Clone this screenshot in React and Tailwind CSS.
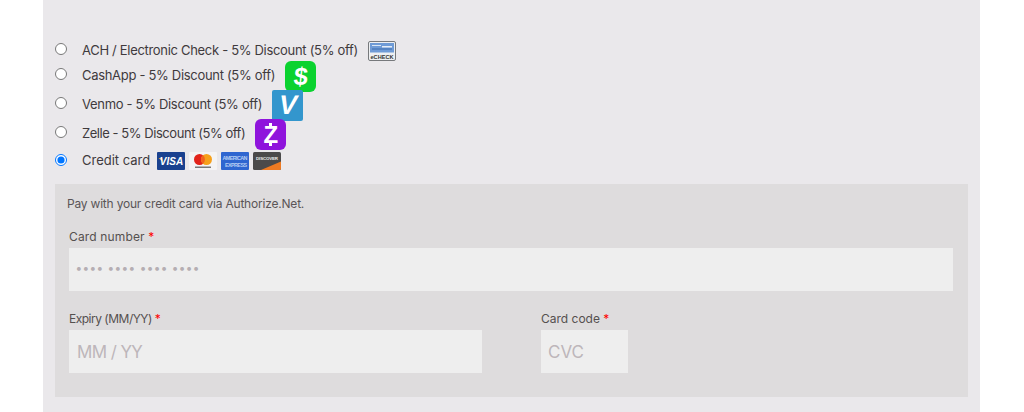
import React from 'react';

const font = { fontFamily: '"Inter", "Liberation Sans", sans-serif' };

function ECheckIcon() {
  return (
    <svg width="28" height="20" viewBox="0 0 28 20" className="shrink-0">
      <rect x="0.5" y="0.5" width="27" height="19" rx="1.5" fill="#eef0f2" stroke="#77797c" />
      <rect x="2" y="2" width="24" height="9.5" fill="#6f9bd6" />
      <rect x="4" y="4" width="9" height="1" fill="#d9e6f5" />
      <rect x="14" y="5" width="10" height="1.5" fill="#e6eef8" />
      <rect x="4" y="7.5" width="20" height="1" fill="#3f6fae" />
      <text x="14" y="17.5" textAnchor="middle" fontSize="5.6" fontWeight="700" fill="#333" fontFamily="Liberation Sans, sans-serif">eCHECK</text>
    </svg>
  );
}

function CashAppIcon() {
  return (
    <div className="w-[31px] h-[31px] shrink-0 rounded-[6px] bg-[#0bd22f] flex items-center justify-center text-white text-[25px] font-bold leading-none" style={{ fontFamily: '"Liberation Sans", sans-serif' }}>
      <span className="inline-block -skew-x-6">$</span>
    </div>
  );
}

function VenmoIcon() {
  return (
    <div className="w-[31px] h-[31px] shrink-0 rounded-[2px] bg-[#3396cd] flex items-center justify-center text-white text-[27px] font-bold leading-none" style={{ fontFamily: '"Liberation Sans", sans-serif' }}>
      <span className="inline-block -skew-x-12">V</span>
    </div>
  );
}

function ZelleIcon() {
  return (
    <div className="relative w-[31px] h-[31px] shrink-0 rounded-[6px] bg-[#8f14dc] flex items-center justify-center text-white text-[24px] font-bold leading-none" style={{ fontFamily: '"Liberation Sans", sans-serif' }}>
      Z
      <span className="absolute left-[14px] top-[4px] w-[3px] h-[4px] bg-white" />
      <span className="absolute left-[14px] bottom-[4px] w-[3px] h-[4px] bg-white" />
    </div>
  );
}

function VisaIcon() {
  return (
    <svg width="28" height="18" viewBox="0 0 28 18" className="shrink-0">
      <rect width="28" height="18" rx="1" fill="#1a418f" />
      <path d="M1.5 6 L5 6 L6 10 Z" fill="#e0a63c" />
      <text x="14.5" y="13" textAnchor="middle" fontSize="10" fontWeight="700" fontStyle="italic" fill="#fff" fontFamily="Liberation Sans, sans-serif">VISA</text>
    </svg>
  );
}

function MastercardIcon() {
  return (
    <svg width="28" height="18" viewBox="0 0 28 18" className="shrink-0">
      <rect width="28" height="18" rx="1" fill="#f4f3f4" />
      <circle cx="10.5" cy="7.5" r="5.5" fill="#e2231a" />
      <circle cx="17.5" cy="7.5" r="5.5" fill="#f6a01a" />
      <path d="M14 3.3 a5.5 5.5 0 0 1 0 8.4 a5.5 5.5 0 0 1 0 -8.4 Z" fill="#f2621e" />
      <rect x="6" y="14.5" width="16" height="1.5" fill="#777" />
    </svg>
  );
}

function AmexIcon() {
  return (
    <svg width="28" height="18" viewBox="0 0 28 18" className="shrink-0">
      <rect width="28" height="18" rx="1" fill="#2f66d0" />
      <text x="14" y="8" textAnchor="middle" fontSize="5.4" fontWeight="700" fill="#b6cdf2" fontFamily="Liberation Sans, sans-serif" textLength="25">AMERICAN</text>
      <text x="15" y="14.5" textAnchor="middle" fontSize="5.4" fontWeight="700" fill="#b6cdf2" fontFamily="Liberation Sans, sans-serif" textLength="22">EXPRESS</text>
    </svg>
  );
}

function DiscoverIcon() {
  return (
    <svg width="28" height="18" viewBox="0 0 28 18" className="shrink-0">
      <rect width="28" height="18" rx="1.5" fill="#4b4a4a" />
      <path d="M8 18 L28 9.5 L28 16.5 a1.5 1.5 0 0 1 -1.5 1.5 Z" fill="#ee7a22" />
      <text x="14" y="7.5" textAnchor="middle" fontSize="4.4" fontWeight="700" fill="#eee" fontFamily="Liberation Sans, sans-serif" textLength="22">DISCOVER</text>
    </svg>
  );
}

function PayRow({ label, checked, height, gap, children, tracking = 'tracking-[-0.31px]' }) {
  return (
    <label className={`flex items-center ${height}`}>
      <input type="radio" name="payment" defaultChecked={checked} className="w-[12px] h-[12px] m-0 -mt-[3px] shrink-0" />
      <span className={`ml-[15px] text-[13px] text-[#3f3a3d] whitespace-nowrap ${tracking}`}>{label}</span>
      <span className={`flex items-center ${gap}`}>{children}</span>
    </label>
  );
}

function Field({ label, className, placeholder, inputClass, labelClass = '' }) {
  return (
    <div className={className}>
      <p className={`text-[12px] leading-[18px] text-[#55504f] ${labelClass}`}>
        {label} <span className="text-[#f00]">*</span>
      </p>
      <input placeholder={placeholder} className={`block w-full h-[43px] mt-[2px] bg-[#eeeeee] outline-none ${inputClass}`} style={font} />
    </div>
  );
}

export default function App() {
  return (
    <div className="h-[412px] bg-white overflow-hidden" style={font}>
      <div className="ml-[43px] w-[937px] h-full bg-[#eae8eb] px-[12px] pt-[40px]">
        <PayRow label="ACH / Electronic Check - 5% Discount (5% off)" height="h-[21px]" gap="ml-[10px]">
          <ECheckIcon />
        </PayRow>
        <PayRow label="CashApp - 5% Discount (5% off)" height="h-[29px]" gap="ml-[10px] mt-[2px]">
          <CashAppIcon />
        </PayRow>
        <PayRow label="Venmo - 5% Discount (5% off)" height="h-[29px]" gap="ml-[10px] mt-[2px]">
          <VenmoIcon />
        </PayRow>
        <PayRow label="Zelle - 5% Discount (5% off)" height="h-[29px]" gap="ml-[10px] mt-[2px]" tracking="tracking-[-0.45px]">
          <ZelleIcon />
        </PayRow>
        <PayRow label="Credit card" checked height="h-[26px]" gap="ml-[7px] gap-[4px]" tracking="tracking-normal">
          <VisaIcon />
          <MastercardIcon />
          <AmexIcon />
          <DiscoverIcon />
        </PayRow>

        <div className="mt-[10px] h-[213px] w-[913px] bg-[#dedcdd] pl-[14px] pr-[15px] pt-[12px]">
          <p className="-ml-[2px] text-[12px] leading-[16px] tracking-[-0.2px] text-[#5a5557]">Pay with your credit card via Authorize.Net.</p>
          <Field label="Card number" className="mt-[16px]" labelClass="tracking-[0.15px]" placeholder="•••• •••• •••• ••••" inputClass="pl-[7px] pb-[5px] text-[12px] font-bold tracking-[1.3px] placeholder:text-[#b5aeb3]" />
          <div className="flex mt-[19px]">
            <Field label="Expiry (MM/YY)" className="w-[413px]" labelClass="tracking-[-0.5px]" placeholder="MM / YY" inputClass="px-[8px] text-[17px] tracking-[-0.6px] placeholder:text-[#bdb6ba]" />
            <Field label="Card code" className="w-[87px] ml-[59px]" placeholder="CVC" inputClass="px-[7px] text-[17px] placeholder:text-[#bdb6ba]" />
          </div>
        </div>
      </div>
    </div>
  );
}
